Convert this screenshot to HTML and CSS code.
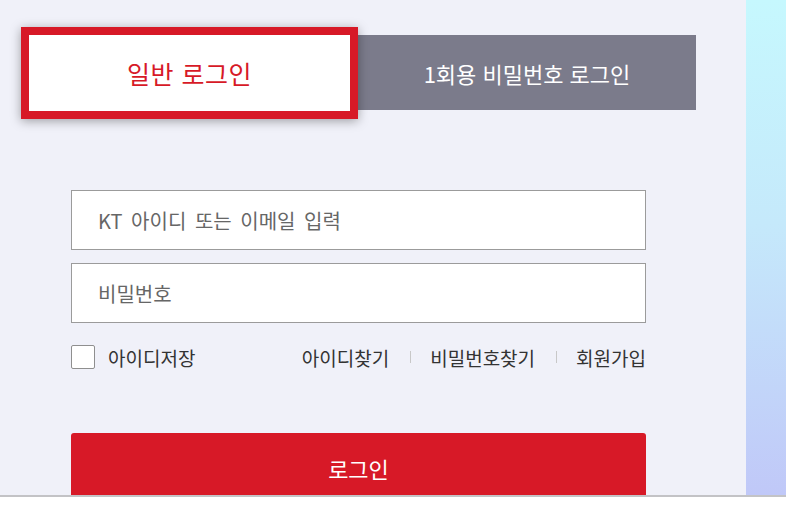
FILE: index.html
```html
<!DOCTYPE html>
<html lang="ko">
<head>
<meta charset="utf-8">
<link rel="stylesheet" href="styles.css">
</head>
<body>
<div class="screen">
  <main class="panel">
    <div class="tabs">
      <div class="tab tab-active">일반 로그인</div>
      <div class="tab tab-otp">1회용 비밀번호 로그인</div>
    </div>
    <form class="form">
      <input class="field" type="text" placeholder="KT 아이디 또는 이메일 입력">
      <input class="field" type="password" placeholder="비밀번호">
      <div class="options">
        <label class="save"><span class="check"></span>아이디저장</label>
        <nav class="links">
          <a class="link">아이디찾기</a>
          <span class="sep"></span>
          <a class="link">비밀번호찾기</a>
          <span class="sep"></span>
          <a class="link">회원가입</a>
        </nav>
      </div>
      <button class="submit" type="button">로그인</button>
    </form>
  </main>
  <aside class="strip"></aside>
</div>
</body>
</html>
```
FILE: styles.css
```css
* { box-sizing: border-box; }
html, body { margin: 0; padding: 0; background: #fff; }
body {
  font-family: "Noto Sans CJK KR", "Noto Sans", sans-serif;
  width: 786px;
  height: 514px;
  overflow: hidden;
}
.screen {
  display: flex;
  height: 497px;
  border-bottom: 2px solid #c3c3c6;
}
.panel {
  width: 746px;
  background: #f0f1f9;
  overflow: hidden;
  padding-top: 27px;
}
.strip {
  flex: 1;
  background: linear-gradient(180deg, #c6f8fe 0%, #c5e9fb 45%, #c0c8f8 100%);
}
.tabs {
  display: flex;
  align-items: flex-start;
  margin-left: 21px;
  width: 675px;
}
.tab {
  display: flex;
  align-items: center;
  justify-content: center;
}
.tab-active {
  width: 337px;
  height: 92px;
  border: 8px solid #d71927;
  background: #fff;
  color: #d71927;
  font-size: 25px;
  letter-spacing: 0.5px;
  box-shadow: 0 2px 10px rgba(0, 0, 0, 0.35);
  z-index: 1;
}
.tab-otp {
  flex: 1;
  height: 75px;
  margin-top: 8px;
  background: #7b7b8b;
  color: #fff;
  font-size: 22px;
}
.form {
  display: flex;
  flex-direction: column;
  margin: 71px 0 0 71px;
  width: 575px;
}
.field {
  height: 60px;
  border: 1px solid #9b9b9b;
  background: #fff;
  padding: 0 0 0 26px;
  font-family: inherit;
  font-size: 20px;
  color: #333;
  outline: none;
  margin: 0 0 13px;
}
.field::placeholder { color: #666; word-spacing: 3px; }
.field + .field { margin-bottom: 0; }
.options {
  display: flex;
  align-items: center;
  justify-content: space-between;
  margin-top: 22px;
  height: 24px;
  font-size: 19px;
  color: #333;
}
.save {
  display: flex;
  align-items: center;
  gap: 13px;
}
.check {
  width: 24px;
  height: 24px;
  border: 1px solid #8f8f8f;
  border-radius: 2px;
  background: #fff;
}
.links {
  display: flex;
  align-items: center;
}
.link { color: #333; }
.sep {
  width: 1px;
  height: 12px;
  background: #c8c8c8;
  margin: 0 19px 0 21px;
}
.submit {
  margin-top: 64px;
  height: 70px;
  border: 0;
  border-radius: 3px 3px 0 0;
  background: #d71927;
  color: #fff;
  font-family: inherit;
  font-size: 22px;
  padding: 0;
}
```
